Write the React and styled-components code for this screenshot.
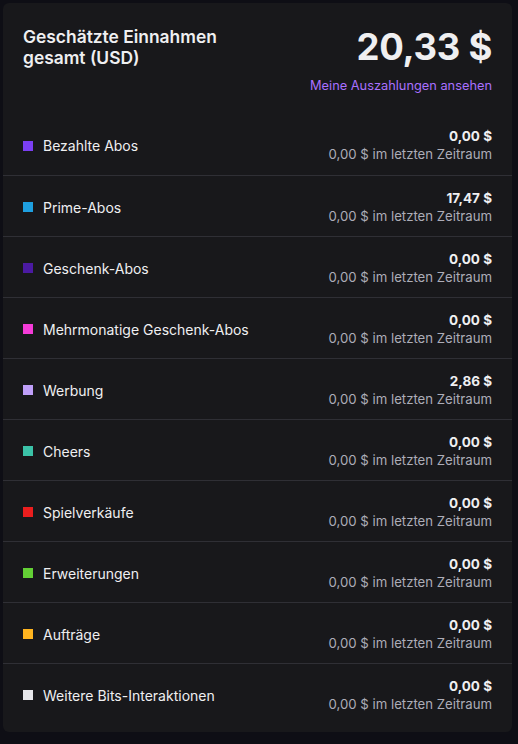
import styled, { createGlobalStyle } from "styled-components";

const GlobalStyle = createGlobalStyle`
  html, body {
    margin: 0;
    padding: 0;
    background: #0e0e15;
    font-family: Inter, "Noto Sans", "Liberation Sans", sans-serif;
  }
  * {
    box-sizing: border-box;
  }
`;

const Page = styled.div`
  padding: 3px 6px 11px 3px;
`;

const Card = styled.div`
  background: #18181b;
  border-radius: 6px;
  padding-bottom: 8px;
  color: #efeff1;
`;

const Header = styled.div`
  display: flex;
  justify-content: space-between;
  align-items: flex-start;
  padding: 22px 20px 0 20px;
  height: 111px;
`;

const Title = styled.div`
  font-size: 17.4px;
  font-weight: 600;
  line-height: 21px;
  width: 230px;
  margin-top: 1px;
`;

const Total = styled.div`
  display: flex;
  flex-direction: column;
  align-items: flex-end;
`;

const BigNumber = styled.div`
  font-size: 36.5px;
  font-weight: 700;
  line-height: 44px;
  letter-spacing: -0.3px;
`;

const PayoutLink = styled.a`
  font-size: 12.8px;
  color: #a970ff;
  margin-top: 9px;
  text-decoration: none;
  cursor: pointer;
`;

const Row = styled.div`
  display: flex;
  justify-content: space-between;
  align-items: center;
  height: 61px;
  padding: 2px 20px 0 20px;
  border-top: ${(p) => (p.$first ? "none" : "1px solid #2f2f35")};
`;

const Label = styled.div`
  display: flex;
  align-items: center;
  gap: 10px;
  font-size: 14px;
  color: #efeff1;
`;

const Swatch = styled.span`
  width: 10px;
  height: 10px;
  background: ${(p) => p.$color};
  display: inline-block;
`;

const Amounts = styled.div`
  display: flex;
  flex-direction: column;
  align-items: flex-end;
`;

const Amount = styled.div`
  font-size: 13.5px;
  font-weight: 700;
  line-height: 18px;
`;

const Previous = styled.div`
  font-size: 13.2px;
  color: #adadb8;
  line-height: 19px;
`;

const rows = [
  { label: "Bezahlte Abos", color: "#7b3ff2", value: "0,00 $" },
  { label: "Prime-Abos", color: "#1e9fe0", value: "17,47 $" },
  { label: "Geschenk-Abos", color: "#4b1aa3", value: "0,00 $" },
  { label: "Mehrmonatige Geschenk-Abos", color: "#f43bd8", value: "0,00 $" },
  { label: "Werbung", color: "#bf9ff9", value: "2,86 $" },
  { label: "Cheers", color: "#3bc2a8", value: "0,00 $" },
  { label: "Spielverkäufe", color: "#eb1e1e", value: "0,00 $" },
  { label: "Erweiterungen", color: "#63d035", value: "0,00 $" },
  { label: "Aufträge", color: "#ffb41f", value: "0,00 $" },
  { label: "Weitere Bits-Interaktionen", color: "#e6e6ea", value: "0,00 $" },
];

export default function App() {
  return (
    <Page>
      <GlobalStyle />
      <Card>
        <Header>
          <Title>Geschätzte Einnahmen gesamt (USD)</Title>
          <Total>
            <BigNumber>20,33 $</BigNumber>
            <PayoutLink>Meine Auszahlungen ansehen</PayoutLink>
          </Total>
        </Header>
        {rows.map((r, i) => (
          <Row key={r.label} $first={i === 0}>
            <Label>
              <Swatch $color={r.color} />
              {r.label}
            </Label>
            <Amounts>
              <Amount>{r.value}</Amount>
              <Previous>0,00 $ im letzten Zeitraum</Previous>
            </Amounts>
          </Row>
        ))}
      </Card>
    </Page>
  );
}
